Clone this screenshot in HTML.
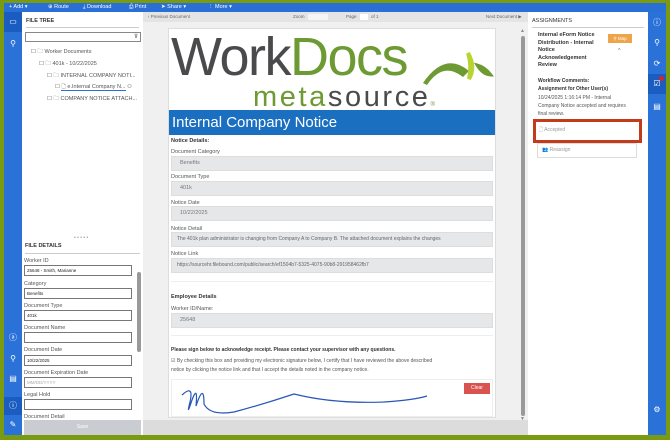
<!DOCTYPE html>
<html><head><meta charset="utf-8"><style>
*{box-sizing:border-box;margin:0;padding:0}
body{width:670px;height:440px;overflow:hidden;background:#7a9a12;font-family:"Liberation Sans",sans-serif;font-size:5.5px;color:#444;position:relative}
.a{position:absolute;white-space:nowrap}
.tb{left:4px;top:3px;width:662px;height:9px;background:#2a6fd6;color:#fff;font-size:5.5px;line-height:9px}
.tb span{position:absolute;top:0}
.lb{left:4px;top:12px;width:18px;height:423px;background:#2a72d8}
.rb{left:648px;top:12px;width:18px;height:423px;background:#2a72d8}
.ft{left:22px;top:12px;width:121px;height:423px;background:#fff}
.ctr{left:143px;top:12px;width:385px;height:423px;background:#f0f0f0}
.as{left:528px;top:12px;width:120px;height:423px;background:#fff}
.lbl{font-size:5.5px;color:#555}
.inp{border:1px solid #777;background:#fff;height:11px;font-size:4.5px;line-height:9px;padding-left:2px;color:#222}
.fld{background:#e6e7e9;border:1px solid #ddd;height:15px;font-size:5.5px;line-height:13px;padding-left:8px;color:#777;overflow:hidden}
.ic{color:#fff;font-size:8px;text-align:center;width:18px}
</style></head><body>
<div class="a tb">
<span style="left:5px">+ Add ▾</span><span style="left:44px">⊕ Route</span><span style="left:79px">⤓ Download</span><span style="left:125px">⎙ Print</span><span style="left:157px">➤ Share ▾</span><span style="left:204px">⋮ More ▾</span>
</div>
<div class="a lb">
<div class="a" style="left:0;top:0;width:18px;height:20px;background:#1a5cbf"></div>
<div class="a ic" style="top:5px">▭</div>
<div class="a ic" style="top:27px">⚲</div>
<div class="a ic" style="top:320px">ⓐ</div>
<div class="a ic" style="top:342px">⚲</div>
<div class="a ic" style="top:362px">▤</div>
<div class="a" style="left:0;top:385px;width:18px;height:18px;background:#1a5cbf"></div>
<div class="a ic" style="top:388px">ⓘ</div>
<div class="a ic" style="top:408px">✎</div>
</div>
<div class="a ft">
<div class="a" style="left:4px;top:6px;font-weight:bold;color:#333">FILE TREE</div>
<div class="a" style="left:4px;top:15px;width:113px;border-top:1px solid #ccc"></div>
<div class="a" style="left:3px;top:20px;width:116px;height:10px;border:1px solid #888;text-align:right;line-height:8px;padding-right:2px">⊽</div>
<div class="a" style="left:9px;top:36px;color:#555">☐ 🗀 Worker Documents</div>
<div class="a" style="left:17px;top:48px;color:#555">☐ 🗀 401k - 10/22/2025</div>
<div class="a" style="left:25px;top:60px;color:#555">☐ 🗀 INTERNAL COMPANY NOTI...</div>
<div class="a" style="left:33px;top:71px;color:#555">☐ <span style="border-bottom:1px solid #2a6fd6">🗋 e.Internal Company N...</span> ⚇</div>
<div class="a" style="left:25px;top:83px;color:#555">☐ 🗀 COMPANY NOTICE ATTACH...</div>
<div class="a" style="left:52px;top:223px;color:#999;font-size:5px">• • • • •</div>
<div class="a" style="left:3px;top:231px;font-weight:bold;color:#333">FILE DETAILS</div>
<div class="a" style="left:3px;top:241px;width:115px;border-top:1px solid #ccc"></div>
<div class="a lbl" style="left:2px;top:246px">Worker ID</div>
<div class="a inp" style="left:2px;top:253px;width:108px">25648 - Smith, Marianne</div>
<div class="a lbl" style="left:2px;top:269px">Category</div>
<div class="a inp" style="left:2px;top:276px;width:108px">Benefits</div>
<div class="a lbl" style="left:2px;top:291px">Document Type</div>
<div class="a inp" style="left:2px;top:298px;width:108px">401k</div>
<div class="a lbl" style="left:2px;top:313px">Document Name</div>
<div class="a inp" style="left:2px;top:320px;width:108px"></div>
<div class="a lbl" style="left:2px;top:335px">Document Date</div>
<div class="a inp" style="left:2px;top:343px;width:108px">10/22/2025</div>
<div class="a lbl" style="left:2px;top:358px">Document Expiration Date</div>
<div class="a inp" style="left:2px;top:365px;width:108px;color:#aaa">MM/DD/YYYY</div>
<div class="a lbl" style="left:2px;top:380px">Legal Hold</div>
<div class="a inp" style="left:2px;top:387px;width:108px"></div>
<div class="a lbl" style="left:2px;top:402px">Document Detail</div>
<div class="a inp" style="left:2px;top:410px;width:108px;height:5px"></div>
<div class="a" style="left:115px;top:260px;width:4px;height:80px;background:#999;border-radius:2px"></div>
<div class="a" style="left:2px;top:408px;width:117px;height:15px;background:#c9ccd1;color:#fff;text-align:center;line-height:15px;font-size:5px">Save</div>
</div>
<div class="a ctr">
<div class="a" style="left:0;top:0;width:385px;height:10px;background:#e4e4e4;font-size:4.5px;line-height:10px;color:#666">
<span class="a" style="left:5px">‹ Previous Document</span><span class="a" style="left:150px">Zoom</span><span class="a" style="left:165px;top:2px;width:20px;height:6px;background:#f4f4f4"></span><span class="a" style="left:203px">Page</span><span class="a" style="left:217px;top:2px;width:8px;height:6px;background:#fff"></span><span class="a" style="left:228px">of 1</span><span class="a" style="left:343px">Next Document ▶</span></div>
<div class="a" style="left:25px;top:16px;width:328px;height:390px;background:#fff;border:1px solid #ddd">
<div class="a" style="left:2px;top:-2px;font-size:54px;color:#4a4a4c;letter-spacing:-1.5px;line-height:60px">Work<span style="color:#6d9a32">Docs</span></div>
<svg class="a" style="left:252px;top:16px" width="74" height="46"><path d="M2 38 Q24 6 48 26 L42 32 Q22 16 6 40Z" fill="#6d9a32"/><path d="M47 8 Q55 22 48 34 Q51 20 47 8Z" fill="#b8d432" stroke="#b8d432" stroke-width="4"/><path d="M56 20 Q64 22 70 30 Q62 30 56 20Z" fill="#6d9a32" stroke="#6d9a32" stroke-width="3"/></svg>
<div class="a" style="left:84px;top:52px;font-size:29px;color:#6d9a32;line-height:32px;letter-spacing:2.6px">meta<span style="color:#4a4a4c">source</span><span style="font-size:6px">®</span></div>
<div class="a" style="left:0;top:81px;width:326px;height:25px;background:#1a6fc0;color:#fff;font-size:15px;line-height:25px;padding-left:3px">Internal Company Notice</div>
<div class="a" style="left:2px;top:109px;font-weight:bold;color:#333">Notice Details:</div>
<div class="a lbl" style="left:2px;top:120px">Document Category</div>
<div class="a fld" style="left:2px;top:127px;width:322px">Benefits</div>
<div class="a lbl" style="left:2px;top:145px">Document Type</div>
<div class="a fld" style="left:2px;top:152px;width:322px">401k</div>
<div class="a lbl" style="left:2px;top:171px">Notice Date</div>
<div class="a fld" style="left:2px;top:177px;width:322px">10/22/2025</div>
<div class="a lbl" style="left:2px;top:197px">Notice Detail</div>
<div class="a fld" style="left:2px;top:203px;width:322px;color:#666;font-size:5px;padding-left:5px">The 401k plan administrator is changing from Company A to Company B. The attached document explains the changes</div>
<div class="a lbl" style="left:2px;top:222px">Notice Link</div>
<div class="a fld" style="left:2px;top:229px;width:322px;color:#666;font-size:5px;padding-left:5px">https://sourcehr.filebound.com/public/search/ef1504b7-5325-4075-90b8-291958462fb7</div>
<div class="a" style="left:2px;top:252px;width:322px;border-top:1px solid #eee"></div>
<div class="a" style="left:2px;top:265px;font-weight:bold;color:#333">Employee Details</div>
<div class="a lbl" style="left:2px;top:277px">Worker ID/Name:</div>
<div class="a fld" style="left:2px;top:284px;width:322px">25648</div>
<div class="a" style="left:2px;top:306px;width:322px;border-top:1px solid #eee"></div>
<div class="a" style="left:2px;top:318px;font-weight:bold;color:#333;font-size:5px">Please sign below to acknowledge receipt. Please contact your supervisor with any questions.</div>
<div class="a" style="left:2px;top:328px;color:#555;line-height:9px;font-size:5px">☑ By checking this box and providing my electronic signature below, I certify that I have reviewed the above described<br>notice by clicking the notice link and that I accept the details noted in the company notice.</div>
<div class="a" style="left:2px;top:350px;width:322px;height:38px;border:1px solid #eee"></div>
<div class="a" style="left:295px;top:354px;width:26px;height:11px;background:#d9534f;color:#fff;text-align:center;line-height:11px;font-size:5px">Clear</div>
<svg class="a" style="left:5px;top:353px" width="300" height="36"><path d="M8 13 Q20 2 16 20 Q12 36 18 18 Q24 2 22 24 Q30 0 30 22 Q36 34 60 30 Q90 22 120 12 Q160 22 210 20 Q240 18 253 14" fill="none" stroke="#2856b8" stroke-width="1.2"/></svg>
</div>
<div class="a" style="left:377px;top:16px;font-size:5px;color:#888">▲</div>
<div class="a" style="left:378px;top:24px;width:4px;height:380px;background:#999;border-radius:2px"></div>
<div class="a" style="left:377px;top:404px;font-size:5px;color:#888">▼</div>
<div class="a" style="left:0;top:408px;width:385px;height:15px;background:#dcdcdc"></div>
</div>
<div class="a as">
<div class="a" style="left:4px;top:6px;color:#333">ASSIGNMENTS</div>
<div class="a" style="left:4px;top:15px;width:112px;border-top:1px solid #ccc"></div>
<div class="a" style="left:10px;top:20px;font-weight:bold;color:#333;line-height:7.5px">Internal eForm Notice<br>Distribution - Internal<br>Notice<br>Acknowledgement<br>Review</div>
<div class="a" style="left:80px;top:22px;width:24px;height:9px;background:#f0a44a;color:#fff;text-align:center;font-size:4.5px;line-height:9px">⚲ Map</div>
<div class="a" style="left:90px;top:36px;color:#666">^</div>
<div class="a" style="left:10px;top:65px;line-height:8.3px;color:#555;font-size:5px"><b style="color:#333">Workflow Comments:</b><br><b style="color:#333">Assignment for Other User(s)</b><br>10/24/2025 1:16:14 PM - Internal<br>Company Notice accepted and requires<br>final review.</div>
<div class="a" style="left:5px;top:107px;width:109px;height:24px;border:3px solid #c33b1a"></div>
<div class="a" style="left:11px;top:115px;color:#999;font-size:5px">🗋 Accepted</div>
<div class="a" style="left:9px;top:131px;width:100px;height:15px;border:1px solid #ddd;color:#999;padding-left:4px;line-height:13px;font-size:5px">👥 Reassign</div>
</div>
<div class="a rb">
<div class="a ic" style="top:5px">ⓘ</div>
<div class="a ic" style="top:26px">⚲</div>
<div class="a ic" style="top:47px">⟳</div>
<div class="a" style="left:0;top:62px;width:18px;height:20px;background:#1a5cbf"></div>
<div class="a ic" style="top:67px">☑</div>
<div class="a" style="left:11px;top:64px;width:5px;height:5px;border-radius:3px;background:#d22"></div>
<div class="a ic" style="top:90px">▤</div>
<div class="a ic" style="top:393px">⚙</div>
</div>
</body></html>
